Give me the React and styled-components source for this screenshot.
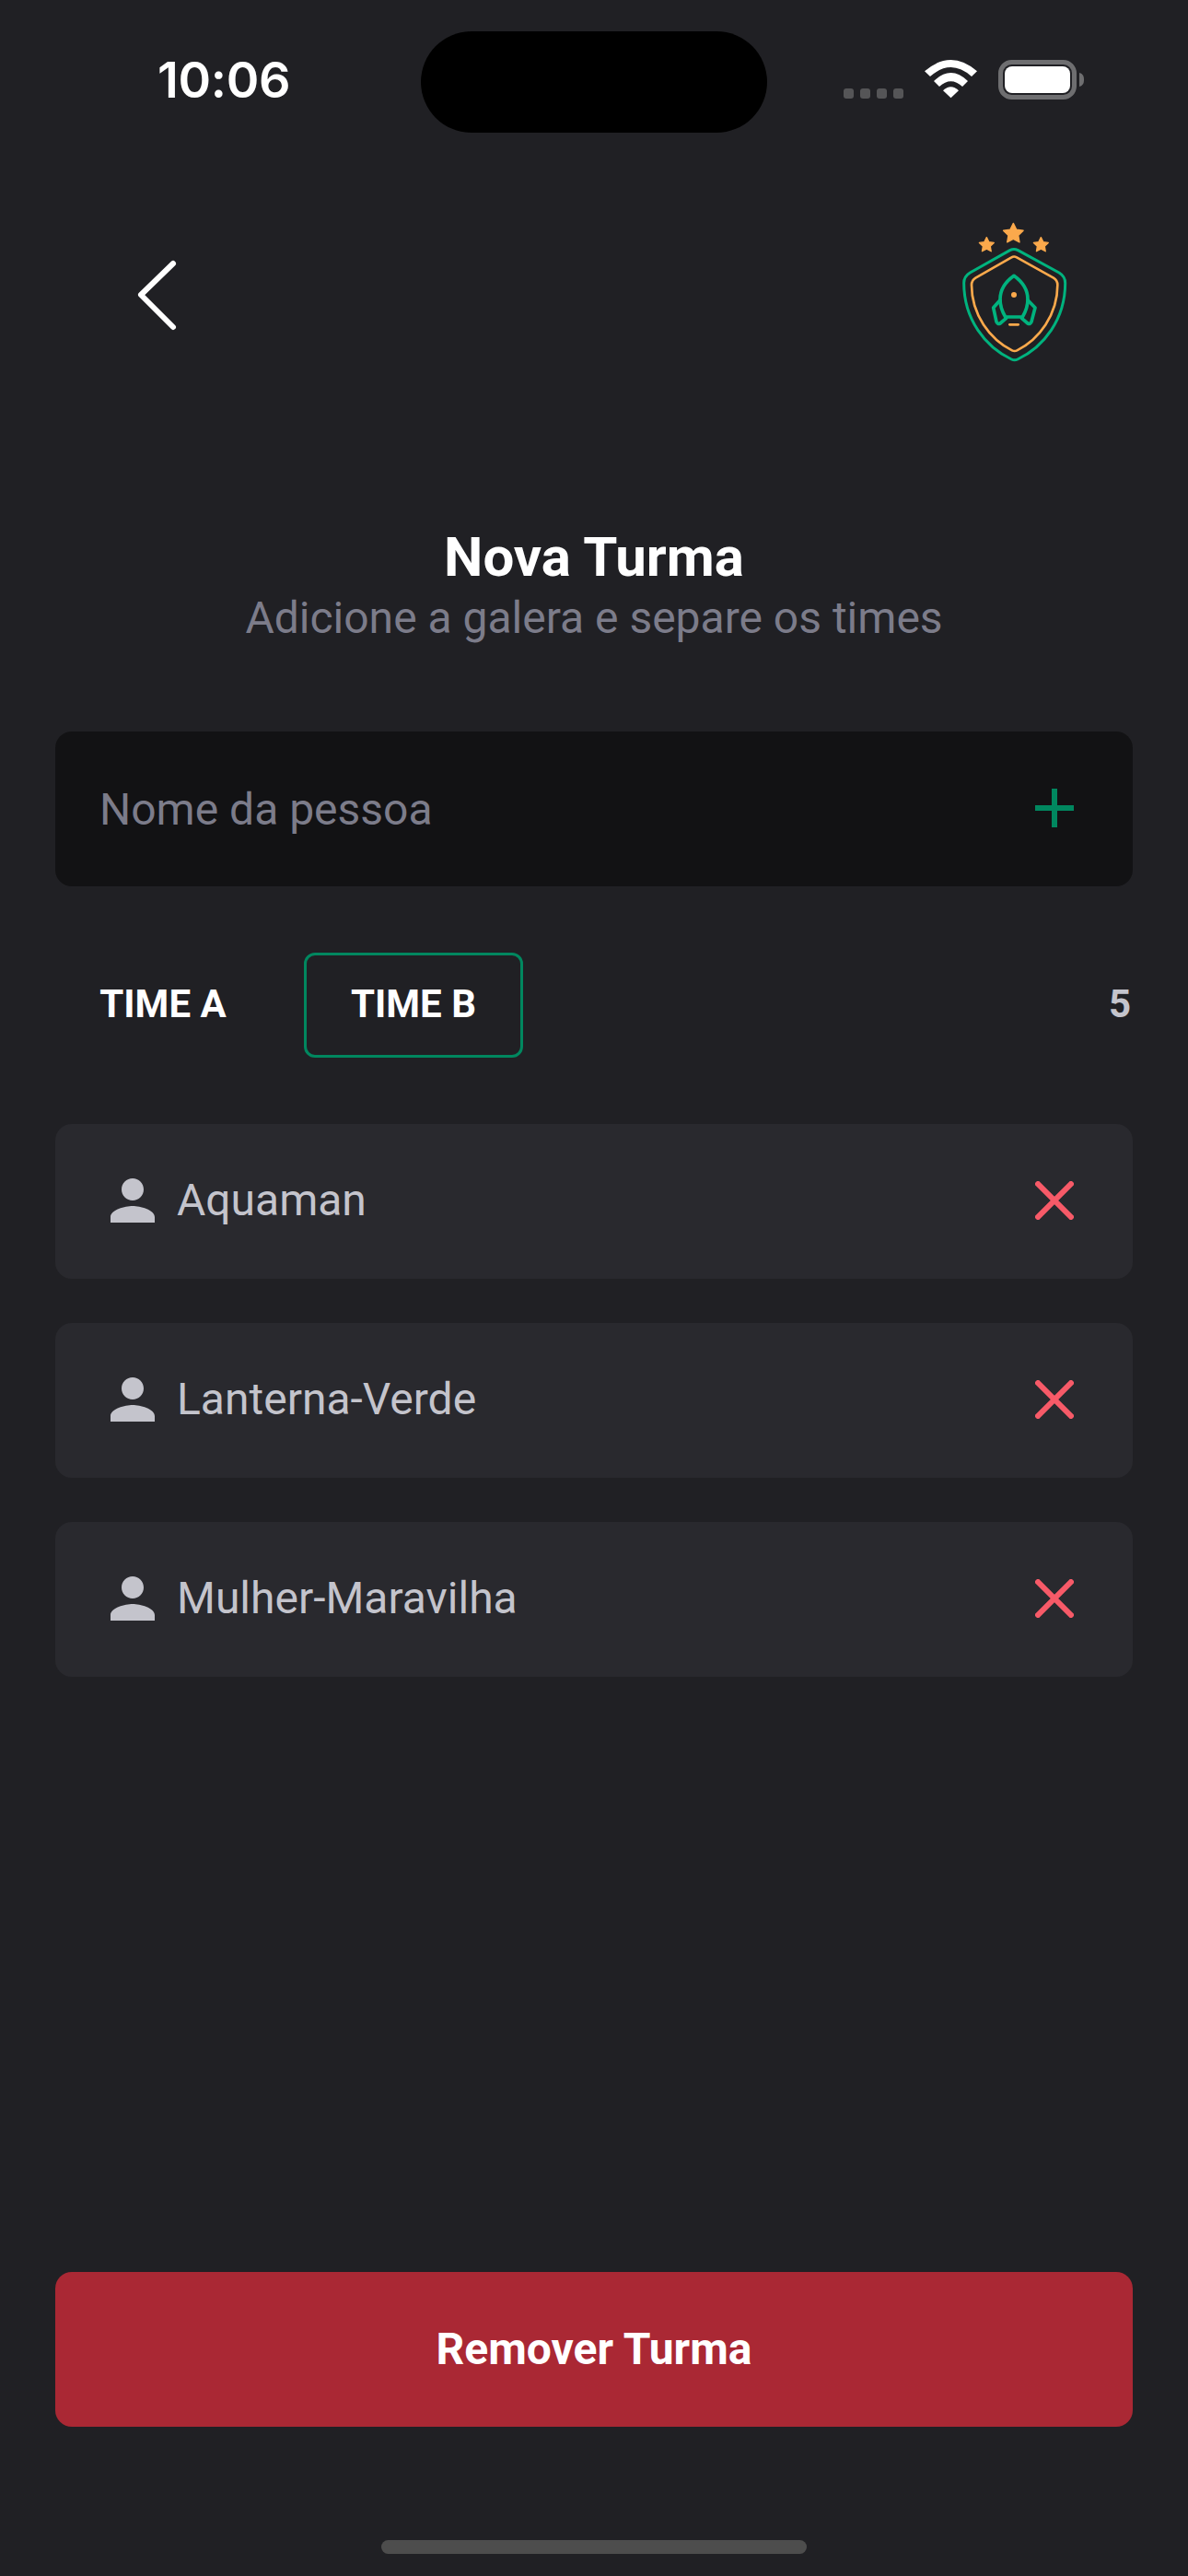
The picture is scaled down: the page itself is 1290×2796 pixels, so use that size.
import React from "react";
import styled, { createGlobalStyle } from "styled-components";

const Global = createGlobalStyle`
  html, body { margin: 0; padding: 0; background: #202024; }
  * { box-sizing: border-box; }
`;

const Page = styled.div`
  width: 1290px;
  height: 2796px;
  background: #202024;
  font-family: Roboto, "Liberation Sans", sans-serif;
  display: flex;
  flex-direction: column;
  overflow: hidden;
`;

const StatusBar = styled.div`
  height: 144px;
  margin-top: 34px;
  display: grid;
  grid-template-columns: 457px 376px 1fr;
  flex-shrink: 0;
`;

const Clock = styled.div`
  padding: 26px 0 0 171px;
  font-family: Inter, "Liberation Sans", sans-serif;
  font-weight: 600;
  font-size: 54px;
  line-height: 54px;
  letter-spacing: -0.3px;
  color: #fff;
`;

const Island = styled.div`
  background: #000;
  border-radius: 55px;
  height: 110px;
`;

const StatusIcons = styled.div`
  padding: 31px 0 0 83px;
  display: flex;
  align-items: flex-start;
`;

const SignalDots = styled.div`
  display: flex;
  gap: 7px;
  margin: 31px 23px 0 0;
`;

const Dot = styled.span`
  width: 11px;
  height: 11px;
  border-radius: 3px;
  background: #555557;
`;

const WifiSvg = styled.svg`
  width: 57px;
  height: 42px;
  margin-right: 23px;
`;

const BatterySvg = styled.svg`
  width: 93px;
  height: 43px;
`;

const Header = styled.div`
  margin-top: 42px;
  height: 190px;
  padding: 0 90px 0 120px;
  display: flex;
  justify-content: space-between;
  align-items: flex-start;
  flex-shrink: 0;
`;

const BackSvg = styled.svg`
  width: 100px;
  height: 100px;
  margin-top: 40px;
`;

const LogoSvg = styled.svg`
  width: 200px;
  height: 190px;
`;

const Content = styled.div`
  flex: 1;
  padding: 0 60px;
  display: flex;
  flex-direction: column;
`;

const Titles = styled.div`
  margin-top: 160px;
  display: flex;
  flex-direction: column;
  align-items: center;
`;

const Title = styled.h1`
  margin: 0;
  font-size: 60px;
  line-height: 70px;
  font-weight: 700;
  color: #fff;
`;

const Subtitle = styled.p`
  margin: 2px 0 0;
  font-size: 48px;
  line-height: 58px;
  font-weight: 400;
  color: #7c7c8a;
`;

const Field = styled.div`
  margin-top: 94px;
  height: 168px;
  background: #121214;
  border-radius: 18px;
  padding: 0 64px 0 48px;
  display: flex;
  align-items: center;
  justify-content: space-between;
`;

const Placeholder = styled.span`
  font-size: 48px;
  color: #7c7c8a;
`;

const FilterRow = styled.div`
  margin-top: 72px;
  display: flex;
  align-items: center;
  justify-content: space-between;
`;

const Tabs = styled.div`
  display: flex;
  gap: 36px;
`;

const Tab = styled.div`
  width: ${(p) => p.$width}px;
  height: 114px;
  padding-bottom: 3px;
  border-radius: 12px;
  border: 3px solid ${(p) => (p.$active ? "#00875f" : "transparent")};
  display: flex;
  align-items: center;
  justify-content: center;
  font-size: 42px;
  font-weight: 700;
  color: #fff;
`;

const Count = styled.span`
  padding: 0 2px 3px 0;
  font-size: 42px;
  font-weight: 700;
  color: #c4c4cc;
`;

const List = styled.div`
  margin-top: 72px;
  display: flex;
  flex-direction: column;
  gap: 48px;
`;

const Row = styled.div`
  height: 168px;
  background: #29292e;
  border-radius: 18px;
  padding: 0 64px 0 48px;
  display: flex;
  align-items: center;
`;

const PersonSvg = styled.svg`
  width: 72px;
  height: 72px;
  margin: 0 12px 2px 0;
  fill: #c4c4cc;
  flex-shrink: 0;
`;

const Name = styled.span`
  flex: 1;
  padding-bottom: 3px;
  font-size: 48px;
  color: #c4c4cc;
`;

const GlyphSvg = styled.svg`
  width: 42px;
  height: 42px;
  margin-bottom: 2px;
  stroke: ${(p) => p.$color};
  stroke-width: 6;
  flex-shrink: 0;
`;

const Spacer = styled.div`
  flex: 1;
`;

const DangerButton = styled.div`
  height: 168px;
  padding-bottom: 2px;
  background: #aa2834;
  border-radius: 18px;
  display: flex;
  align-items: center;
  justify-content: center;
  font-size: 48px;
  font-weight: 700;
  color: #fff;
`;

const HomeBar = styled.div`
  align-self: center;
  width: 462px;
  height: 15px;
  margin: 123px 0 24px;
  border-radius: 8px;
  background: #4d4d4d;
`;

const Star = ({ cx, cy, r }) => {
  const pts = [];
  for (let i = 0; i < 10; i++) {
    const rad = i % 2 === 0 ? r : r * 0.5;
    const a = -Math.PI / 2 + (i * Math.PI) / 5;
    pts.push(`${(cx + rad * Math.cos(a)).toFixed(2)},${(cy + rad * Math.sin(a)).toFixed(2)}`);
  }
  return <polygon points={pts.join(" ")} fill="#fba94c" stroke="#fba94c" strokeWidth="4" strokeLinejoin="round" />;
};

const Logo = () => (
  <LogoSvg viewBox="0 0 600 570" fill="none" strokeLinecap="round" strokeLinejoin="round">
    <Star cx={301} cy={101} r={34} />
    <Star cx={214} cy={138} r={25} />
    <Star cx={391} cy={138} r={25} />
    <path d="M290 155Q303 148 316 155L450 228Q470 240 470 262C470 380 400 470 315 510Q305 515 295 510C210 470 140 380 140 262Q140 240 160 228Z" stroke="#00b37e" strokeWidth="9" />
    <path d="M295 178Q303 173 312 178L432 245Q445 253 445 268C445 365 385 445 313 481Q305 485 297 481C225 445 165 365 165 268Q165 253 178 245Z" stroke="#fba94c" strokeWidth="8" />
    <path d="M303 238C275 258 258 285 258 315C258 335 265 355 275 372L331 372C341 355 348 335 348 315C348 285 331 258 303 238Z" stroke="#00b37e" strokeWidth="11" />
    <path d="M258 317L236 342L246 388Q250 397 258 393L278 376M348 317L372 342L360 388Q356 397 348 393L328 376" stroke="#00b37e" strokeWidth="11" />
    <circle cx="303" cy="300" r="9" fill="#fba94c" />
    <path d="M289 397H317" stroke="#fba94c" strokeWidth="8" />
  </LogoSvg>
);

const names = ["Aquaman", "Lanterna-Verde", "Mulher-Maravilha"];

export default function App() {
  return (
    <Page>
      <Global />
      <StatusBar>
        <Clock>10:06</Clock>
        <Island />
        <StatusIcons>
          <SignalDots>
            <Dot /><Dot /><Dot /><Dot />
          </SignalDots>
          <WifiSvg viewBox="0 0 57 42" fill="#fff">
            <path d="M0 12.3Q28.5 -12.3 57 12.3L51 18Q28.5 -2 6 18Z" />
            <path d="M10 23Q28.5 5 47 23L41 29Q28.5 17.6 16 29Z" />
            <path d="M20 33.3Q28.5 25.3 37 33.3L28.5 41.3Z" />
          </WifiSvg>
          <BatterySvg viewBox="0 0 93 43">
            <rect x="2.5" y="2.5" width="80" height="38" rx="12" fill="none" stroke="#6e6e70" strokeWidth="5" />
            <rect x="7" y="7" width="71" height="29" rx="8" fill="#fff" />
            <path d="M88 14C92 15 93 18 93 21.500C93 25 92 28 88 29Z" fill="#6e6e70" />
          </BatterySvg>
        </StatusIcons>
      </StatusBar>
      <Header>
        <BackSvg viewBox="0 0 100 100" fill="none" stroke="#fff" strokeWidth="6" strokeLinecap="round" strokeLinejoin="round">
          <path d="M68 26L33 60L68 95" />
        </BackSvg>
        <Logo />
      </Header>
      <Content>
        <Titles>
          <Title>Nova Turma</Title>
          <Subtitle>Adicione a galera e separe os times</Subtitle>
        </Titles>
        <Field>
          <Placeholder>Nome da pessoa</Placeholder>
          <GlyphSvg $color="#00875f" viewBox="0 0 42 42"><path d="M0 21H42M21 0V42" /></GlyphSvg>
        </Field>
        <FilterRow>
          <Tabs>
            <Tab $width={234}>TIME A</Tab>
            <Tab $width={238} $active>TIME B</Tab>
          </Tabs>
          <Count>5</Count>
        </FilterRow>
        <List>
          {names.map((n) => (
            <Row key={n}>
              <PersonSvg viewBox="0 0 24 24"><path d="M12 12c2.21 0 4-1.79 4-4s-1.79-4-4-4-4 1.79-4 4 1.79 4 4 4zm0 2c-2.67 0-8 1.34-8 4v2h16v-2c0-2.66-5.33-4-8-4z" /></PersonSvg>
              <Name>{n}</Name>
              <GlyphSvg $color="#f75a68" viewBox="0 0 42 42"><path d="M1 1L41 41M41 1L1 41" /></GlyphSvg>
            </Row>
          ))}
        </List>
        <Spacer />
        <DangerButton>Remover Turma</DangerButton>
        <HomeBar />
      </Content>
    </Page>
  );
}
